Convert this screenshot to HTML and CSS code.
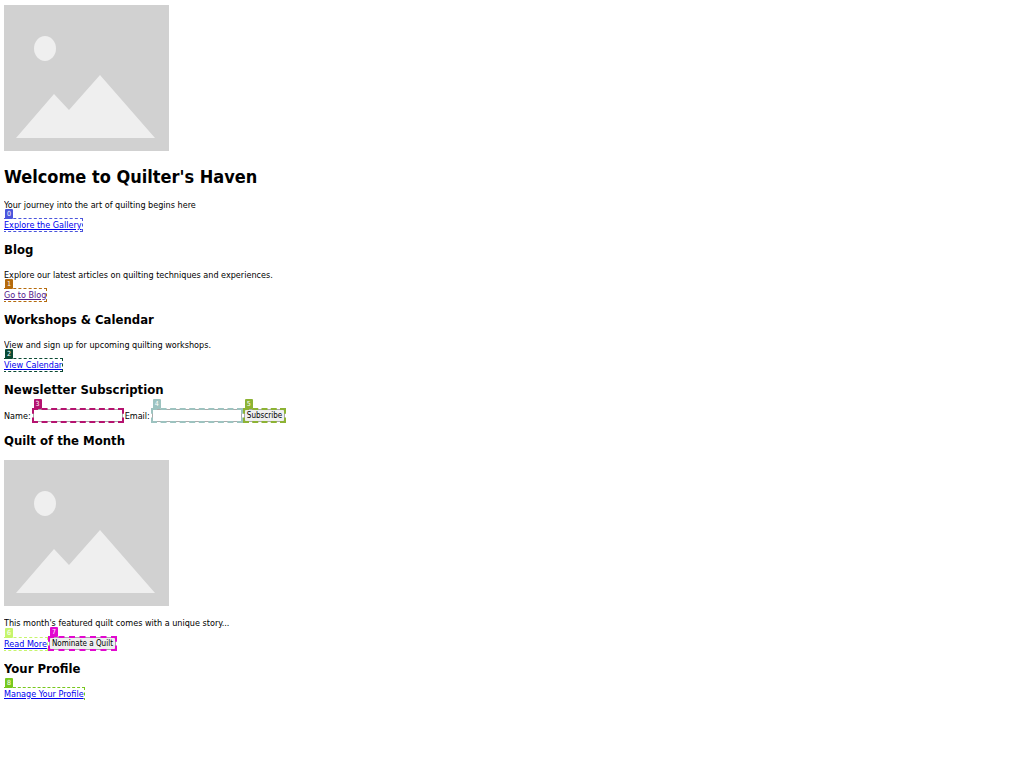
FILE: index.html
```html
<!DOCTYPE html>
<html lang="en">
<head>
<meta charset="utf-8">
<title>Quilter's Haven</title>
<link rel="stylesheet" href="styles.css">
</head>
<body>
<header>
  <svg class="picture" viewBox="0 0 165 146" preserveAspectRatio="none" role="img" aria-label="Quilt banner"><rect width="165" height="146" fill="#d1d1d1"/><ellipse cx="41" cy="43.5" rx="11" ry="12.5" fill="#efefef"/><path d="M12 133L50 89L65 105L96 70L151 133Z" fill="#efefef"/></svg>
  <h1>Welcome to Quilter's Haven</h1>
  <p>Your journey into the art of quilting begins here</p>
  <div class="row"><span class="mark indigo"><a href="#gallery">Explore the Gallery</a><span class="badge">0</span></span></div>
</header>
<section>
  <h2>Blog</h2>
  <p>Explore our latest articles on quilting techniques and experiences.</p>
  <div class="row"><span class="mark orange"><a class="seen" href="#blog">Go to Blog</a><span class="badge">1</span></span></div>
</section>
<section>
  <h2>Workshops &amp; Calendar</h2>
  <p>View and sign up for upcoming quilting workshops.</p>
  <div class="row"><span class="mark forest"><a href="#calendar">View Calendar</a><span class="badge">2</span></span></div>
</section>
<section>
  <h2>Newsletter Subscription</h2>
  <form class="row">
    <label for="name">Name:</label>
    <span class="mark control magenta"><input id="name" type="text"><span class="badge">3</span></span>
    <label for="email">Email:</label>
    <span class="mark control teal"><input id="email" type="email"><span class="badge">4</span></span>
    <span class="mark control olive"><button type="button">Subscribe</button><span class="badge">5</span></span>
  </form>
</section>
<section>
  <h2>Quilt of the Month</h2>
  <svg class="picture" viewBox="0 0 165 146" preserveAspectRatio="none" role="img" aria-label="Quilt of the month"><rect width="165" height="146" fill="#d1d1d1"/><ellipse cx="41" cy="43.5" rx="11" ry="12.5" fill="#efefef"/><path d="M12 133L50 89L65 105L96 70L151 133Z" fill="#efefef"/></svg>
  <p>This month's featured quilt comes with a unique story...</p>
  <div class="row"><span class="mark lime"><a href="#more">Read More</a><span class="badge">6</span></span>
  <span class="mark control pink"><button type="button">Nominate a Quilt</button><span class="badge">7</span></span></div>
</section>
<section>
  <h2>Your Profile</h2>
  <div class="row"><span class="mark green"><a href="#profile">Manage Your Profile</a><span class="badge">8</span></span></div>
</section>
</body>
</html>
```
FILE: styles.css
```css
body {
  margin: 5px 4px;
  background: #fff;
  color: #000;
  font: 9px/12px "DejaVu Sans Condensed", "DejaVu Sans", sans-serif;
}
.picture { display: block; width: 165px; height: 146px; }
h1 { margin: 15px 0 11px; font-size: 18px; line-height: 22px; }
h2 { margin: 11px 0; font-size: 13px; line-height: 16px; }
p { margin: 11px 0 8px; }
.row { display: flex; align-items: center; gap: 2px; }
.mark { position: relative; display: flex; }
.mark::after {
  content: "";
  position: absolute;
  inset: -1px;
  border: 1px dashed var(--tint);
  pointer-events: none;
}
.control::after { border-width: 2px; }
.badge {
  position: absolute;
  left: 1px;
  bottom: 100%;
  width: 8px;
  height: 10px;
  border-radius: 1px;
  background: var(--tint);
  color: #fff;
  font-size: 7px;
  line-height: 10px;
  text-align: center;
}
a { color: #00e; }
.seen { color: #551a8b; }
input, button {
  box-sizing: border-box;
  height: 13px;
  margin: 0;
  border: 1px solid #aaa;
  font: inherit;
}
input { width: 90px; padding: 0 1px; background: #fff; }
button {
  padding: 0 2px;
  border-radius: 2px;
  background: #efefef;
  color: #000;
  font-size: 8px;
  line-height: 11px;
}
.indigo { --tint: #4b55dc; }
.orange { --tint: #b56a0c; }
.forest { --tint: #0b4a34; }
.magenta { --tint: #b5126f; }
.teal { --tint: #9dc3c0; }
.olive { --tint: #8db334; }
.lime { --tint: #c6f56c; }
.pink { --tint: #e208cf; }
.green { --tint: #78c81e; }
```
